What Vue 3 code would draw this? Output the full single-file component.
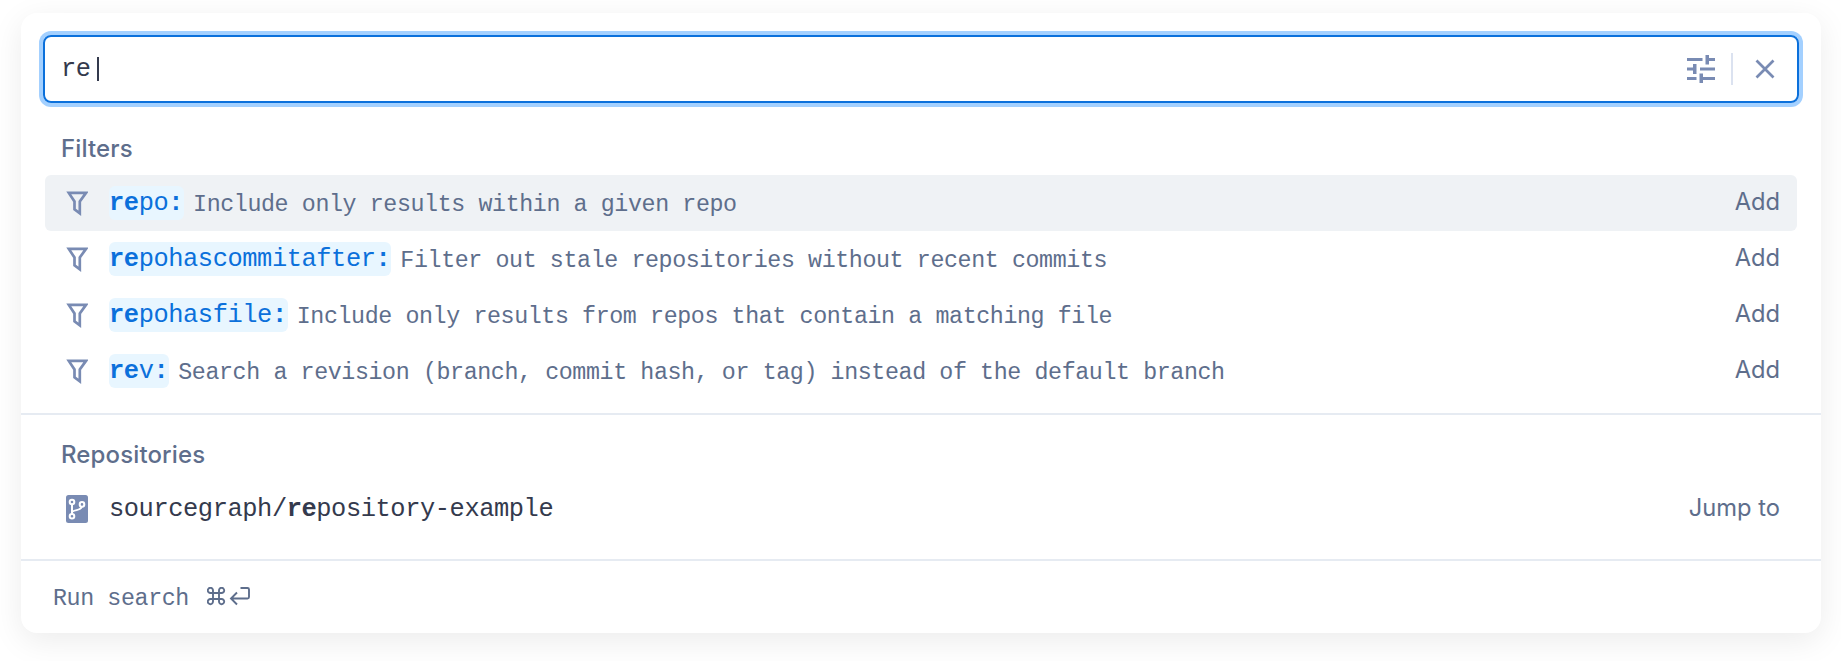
<script setup>
const filters = [
  { head: 're', tail: 'po', text: 'Include only results within a given repo', active: true },
  { head: 're', tail: 'pohascommitafter', text: 'Filter out stale repositories without recent commits' },
  { head: 're', tail: 'pohasfile', text: 'Include only results from repos that contain a matching file' },
  { head: 're', tail: 'v', text: 'Search a revision (branch, commit hash, or tag) instead of the default branch' },
]
</script>

<template>
  <main class="page">
    <div class="panel">
      <div class="search">
        <span class="query">re</span><span class="caret"></span>
        <div class="tools">
          <svg class="tune" width="28" height="28" viewBox="0 0 28 28" fill="#798bb3">
            <path d="M0 3h15.500v3H0zM18.500 0h3.500v3H28v3h-6v3.500h-3.500zM0 12.500h6V9h3.500v10H6v-3.500H0zM13 12.500h15v3H13zM0 22h9.500v3H0zM12.500 18.500H16V22H28v3H16v3h-3.500z" />
          </svg>
          <span class="bar"></span>
          <svg class="close" width="20" height="20" viewBox="0 0 20 20" fill="none" stroke="#798bb3" stroke-width="2.700">
            <path d="M1.500 1.500l17 17M18.500 1.500l-17 17" />
          </svg>
        </div>
      </div>

      <section class="filters">
        <h2>Filters</h2>
        <div v-for="f in filters" :key="f.tail" class="row" :class="{ active: f.active }">
          <svg class="icon" width="22" height="25" viewBox="0 0 22 25" fill="none" stroke="#798bb3" stroke-width="2.700">
            <path d="M2.800 1.900H20L13.800 10.500V22.300L8.500 18.300V10.500Z" />
          </svg>
          <span class="token"><b>{{ f.head }}</b>{{ f.tail }}<b>:</b></span>
          <span class="desc">{{ f.text }}</span>
          <span class="action">Add</span>
        </div>
      </section>

      <section class="repos">
        <h2>Repositories</h2>
        <div class="row">
          <svg class="icon" width="22" height="28" viewBox="0 0 22 28">
            <rect width="22" height="28" rx="2.500" fill="#798bb3" />
            <g fill="none" stroke="#fff" stroke-width="2">
              <circle cx="6" cy="7" r="2.300" />
              <circle cx="6" cy="21.200" r="2.300" />
              <circle cx="16" cy="9.400" r="2.300" />
              <path d="M6 9.200V19M15.700 11.600C15.200 15.500 10 14.500 6.500 16.500" />
            </g>
          </svg>
          <span class="repo">sourcegraph/<b>re</b>pository-example</span>
          <span class="action">Jump to</span>
        </div>
      </section>

      <footer>
        <span class="run">Run search</span>
        <svg class="keys" width="44" height="20" viewBox="0 0 44 20" fill="none" stroke="#5e6e8c" stroke-width="1.900">
          <path d="M6 6V3.500A2.600 2.600 0 1 0 3.500 6H14.500A2.600 2.600 0 1 0 12 3.500V14.500A2.600 2.600 0 1 0 14.500 12H3.500A2.600 2.600 0 1 0 6 14.500Z" />
          <path d="M33.500 1H40.500Q42 1 42 2.500V10Q42 11.500 40.500 11.500H24M30 5.500L24 11.500L30 17.500" />
        </svg>
      </footer>
    </div>
  </main>
</template>

<style>
body {
  margin: 0;
  background: #fff;
}
</style>

<style scoped>
.page {
  box-sizing: border-box;
  width: 1841px;
  height: 661px;
  padding: 13px 20px 0 21px;
  overflow: hidden;
  background: #fff;
  font-family: Inter, sans-serif;
  color: #5e6e8c;
}
.panel {
  box-sizing: border-box;
  height: 620px;
  border-radius: 16px;
  background: #fff;
  box-shadow: 0 8px 32px rgba(0, 0, 0, 0.08);
  padding-top: 22px;
}
.search {
  box-sizing: border-box;
  height: 68px;
  margin: 0 22px;
  border: 2px solid #0b70db;
  border-radius: 8px;
  box-shadow: 0 0 0 4px #a3d0ff;
  display: flex;
  align-items: center;
  padding: 0 22px 0 16px;
}
.query,
.token,
.repo {
  font-family: "Liberation Mono", monospace;
  font-size: 25.400px;
  letter-spacing: -0.430px;
}
.query {
  padding-top: 1px;
  color: #343a4d;
}
.caret {
  width: 2px;
  height: 24px;
  margin-left: 6px;
  background: #343a4d;
}
.tools {
  display: flex;
  align-items: center;
  margin-left: auto;
}
.bar {
  width: 2px;
  height: 32px;
  margin: 0 22px 0 16px;
  background: #dbe2f0;
}
h2 {
  margin: 0;
  padding-left: 40px;
  font-size: 24px;
  font-weight: 500;
  line-height: 32px;
  letter-spacing: 0.130px;
}
.filters {
  box-sizing: border-box;
  height: 312px;
  padding-top: 30px;
  border-bottom: 2px solid #e6ebf2;
}
.filters h2 {
  height: 42px;
}
.row {
  box-sizing: border-box;
  height: 56px;
  margin: 0 24px;
  padding: 0 17px 0 21px;
  border-radius: 6px;
  display: flex;
  align-items: center;
}
.active {
  background: #eff2f5;
}
.token {
  height: 34px;
  margin-left: 21px;
  padding-right: 1px;
  border-radius: 6px;
  line-height: 35px;
  background: #e8f6ff;
  color: #0b70db;
}
.desc,
.run {
  font-family: "Liberation Mono", monospace;
  font-size: 23.300px;
  letter-spacing: -0.390px;
  padding-top: 4px;
}
.desc {
  margin-left: 9px;
  white-space: pre;
}
.action {
  margin-left: auto;
  padding-bottom: 3px;
  font-size: 23.700px;
}
.repos {
  box-sizing: border-box;
  height: 146px;
  padding-top: 24px;
  border-bottom: 2px solid #e6ebf2;
}
.repos h2 {
  height: 42px;
}
.repo {
  margin-left: 21px;
  color: #343a4d;
}
footer {
  display: flex;
  align-items: center;
  height: 72px;
  padding-left: 32px;
}
.keys {
  margin-left: 18px;
}
</style>
